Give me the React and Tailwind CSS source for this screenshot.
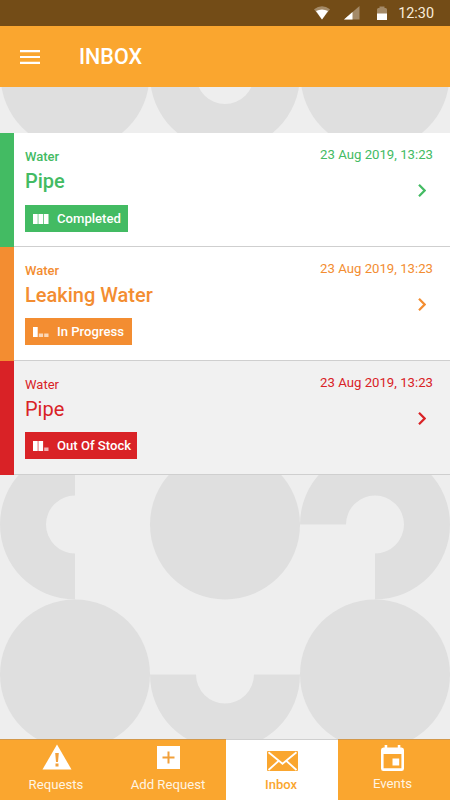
import clsx from 'clsx';

const requests = [
    {
        type: 'Water',
        title: 'Pipe',
        date: '23 Aug 2019, 13:23',
        status: 'Completed',
        progress: 3,
        read: false,
        color: 'text-[#43bb63]',
        fill: 'bg-[#43bb63]',
        badge: 'mt-[9px] w-[103px]',
    },
    {
        type: 'Water',
        title: 'Leaking Water',
        date: '23 Aug 2019, 13:23',
        status: 'In Progress',
        progress: 1,
        read: false,
        color: 'text-[#f38d31]',
        fill: 'bg-[#f38d31]',
        badge: 'mt-2 w-[107px]',
    },
    {
        type: 'Water',
        title: 'Pipe',
        date: '23 Aug 2019, 13:23',
        status: 'Out Of Stock',
        progress: 2,
        read: true,
        color: 'text-[#d92226]',
        fill: 'bg-[#d92226]',
        badge: 'mt-2 w-28',
    },
];

function Pattern() {
    return (
        <svg className="absolute inset-0" width="450" height="800" viewBox="0 0 450 800" fill="#dfdfdf">
            <circle cx="75" cy="75" r="74.5" />
            <circle cx="375" cy="75" r="74.5" />
            <path d="M150 75a75 75 0 0 0 150 0h-46a29 29 0 0 1-58 0z" />

            <path d="M75 449.500a75 75 0 0 0 0 150v-46a29 29 0 0 1 0-58z" />
            <circle cx="225" cy="524.500" r="75" />
            <path d="M300 524.500a75 75 0 1 1 75 75v-46a29 29 0 1 0-29-29z" />

            <circle cx="75" cy="674.500" r="75" />
            <circle cx="375" cy="674.500" r="75" />
            <path d="M150 674.500a75 75 0 0 0 150 0h-46a29 29 0 0 1-58 0z" />
        </svg>
    );
}

function StatusBar() {
    return (
        <div className="flex h-[26px] items-center justify-end bg-[#734c17] pr-4">
            <svg width="16" height="14" viewBox="0 0 16 14" fill="#fff">
                <path opacity=".35" d="M0 3.200Q8-2.800 16 3.200L8 13.500z" />
                <path d="M2 5Q8 2 14 5L8 13.500z" />
            </svg>
            <svg className="ml-[14px]" width="16" height="14" viewBox="0 0 16 14" fill="#fff">
                <path opacity=".35" d="M15.500 0v13.500H0z" />
                <path d="M8.500 6v7.500H0z" />
            </svg>
            <svg className="ml-[17px]" width="10" height="15" viewBox="0 0 10 15" fill="#fff">
                <path opacity=".35" d="M0 3.500q0-1.500 1.500-1.500H2.500V.5h5V2h1q1.500 0 1.500 1.500V8H0z" />
                <path d="M0 7.500h10v6.500H0z" />
            </svg>
            <span className="ml-[11px] mt-[2px] text-[14.400px] leading-none text-[#f8eddb]">12:30</span>
        </div>
    );
}

function Header() {
    return (
        <div className="flex h-[61px] items-center bg-[#faa62f] pl-5 text-white">
            <svg width="20" height="14" viewBox="0 0 20 14" fill="#fff">
                <path d="M0 0h20v2.200H0zM0 5.900h20v2.200H0zM0 11.800h20V14H0z" />
            </svg>
            <h1 className="ml-[39px] mt-[2px] text-[21.500px] font-medium">INBOX</h1>
        </div>
    );
}

function ProgressIcon({ value }) {
    return (
        <svg width="16" height="10" viewBox="0 0 16 10" fill="#fff">
            {[0, 1, 2].map((step) =>
                step < value ? (
                    <rect key={step} x={step * 5.4} y="0" width="4.700" height="10" />
                ) : (
                    <rect key={step} x={step * 5.4 + 0.4} y="6.500" width="4.300" height="3.500" opacity=".65" />
                )
            )}
        </svg>
    );
}

function RequestCard({ item }) {
    return (
        <div className="flex h-[114px]">
            <div className={clsx('w-[14px]', item.fill)} />
            <div
                className={clsx(
                    'flex flex-1 justify-between border-b border-[#cfcfcf] pl-[11px] pr-[17px]',
                    item.read ? 'bg-[#f1f1f1]' : 'bg-white',
                    item.color
                )}
            >
                <div className="pt-[15px]">
                    <p className={clsx('text-[13px] leading-[18px]', !item.read && 'font-medium')}>{item.type}</p>
                    <h2 className={clsx('text-[20px] leading-[30px]', !item.read && 'font-medium')}>{item.title}</h2>
                    <div className={clsx('flex h-[27px] items-center pl-2 text-white', item.fill, item.badge)}>
                        <ProgressIcon value={item.progress} />
                        <span className="ml-2 mt-px whitespace-nowrap text-[13.100px] font-medium">{item.status}</span>
                    </div>
                </div>
                <div className="flex flex-col items-end pt-[13px]">
                    <p className="text-[13.200px] leading-[18px]">{item.date}</p>
                    <svg className="mr-[7px] mt-5" width="8" height="13" viewBox="0 0 8 13" fill="none" stroke="currentColor" strokeWidth="2.200">
                        <path d="M1 .8l5.600 5.700L1 12.200" />
                    </svg>
                </div>
            </div>
        </div>
    );
}

function BottomNav() {
    return (
        <nav className="flex h-[61px] border-t border-[#d3984a] bg-[#faa62f] text-[13.200px] leading-[16px] text-[#fff4e3]">
            <div className="flex w-[113px] flex-col items-center pr-px">
                <svg className="ml-[2px] mt-1" width="30" height="26" viewBox="0 0 30 26">
                    <path fill="#fff" d="M15 .5l14.500 25H.5z" />
                    <path fill="#f2a03a" d="M13.200 9h3.600l-.8 9h-2zM13.500 19.500h3v3h-3z" />
                </svg>
                <span className="mt-[7px]">Requests</span>
            </div>
            <div className="flex w-[113px] flex-col items-center pr-[3px]">
                <svg className="mt-[6px]" width="23" height="23" viewBox="0 0 23 23">
                    <path fill="#fff" d="M0 0h23v23H0z" />
                    <path stroke="#f2a03a" strokeWidth="2" d="M11.500 5.500v12M5.500 11.500h12" />
                </svg>
                <span className="mt-2">Add Request</span>
            </div>
            <div className="-mt-px flex w-28 flex-col items-center border-t border-[#cfcfcf] bg-white pr-[2px] font-medium text-[#faa62f]">
                <svg className="ml-[2px] mt-[11px]" width="31" height="20" viewBox="0 0 31 20" fill="none">
                    <rect width="31" height="20" rx="1" fill="#faa62f" />
                    <path stroke="#fff" strokeWidth="1.800" d="M1.500 1.200L15.500 12.800 29.500 1.200M1.500 19L11.500 10M29.500 19L19.500 10" />
                </svg>
                <span className="mt-[6px] text-[13px]">Inbox</span>
            </div>
            <div className="flex w-28 flex-col items-center pr-[3px]">
                <svg className="mt-[5px]" width="23" height="26" viewBox="0 0 24 26" preserveAspectRatio="none" fill="#fff">
                    <path
                        fillRule="evenodd"
                        d="M3.800 0h2.700v2.500h11V0h2.700v2.500H21.500Q24 2.500 24 5v18.500q0 2.500-2.500 2.500h-19Q0 26 0 23.500V5Q0 2.500 2.500 2.500h1.300zM2.700 9v14.300h18.600V9z"
                    />
                    <path d="M12 13.500h7v7h-7z" />
                </svg>
                <span className="mt-[5px]">Events</span>
            </div>
        </nav>
    );
}

function App() {
    return (
        <div className="relative h-[800px] w-[450px] overflow-hidden bg-[#eeeeee] font-[Roboto,sans-serif]">
            <Pattern />
            <div className="relative flex h-full flex-col">
                <StatusBar />
                <Header />
                <div className="flex-1 pt-[46px]">
                    {requests.map((item) => (
                        <RequestCard key={item.status} item={item} />
                    ))}
                </div>
                <BottomNav />
            </div>
        </div>
    );
}

export default App;
